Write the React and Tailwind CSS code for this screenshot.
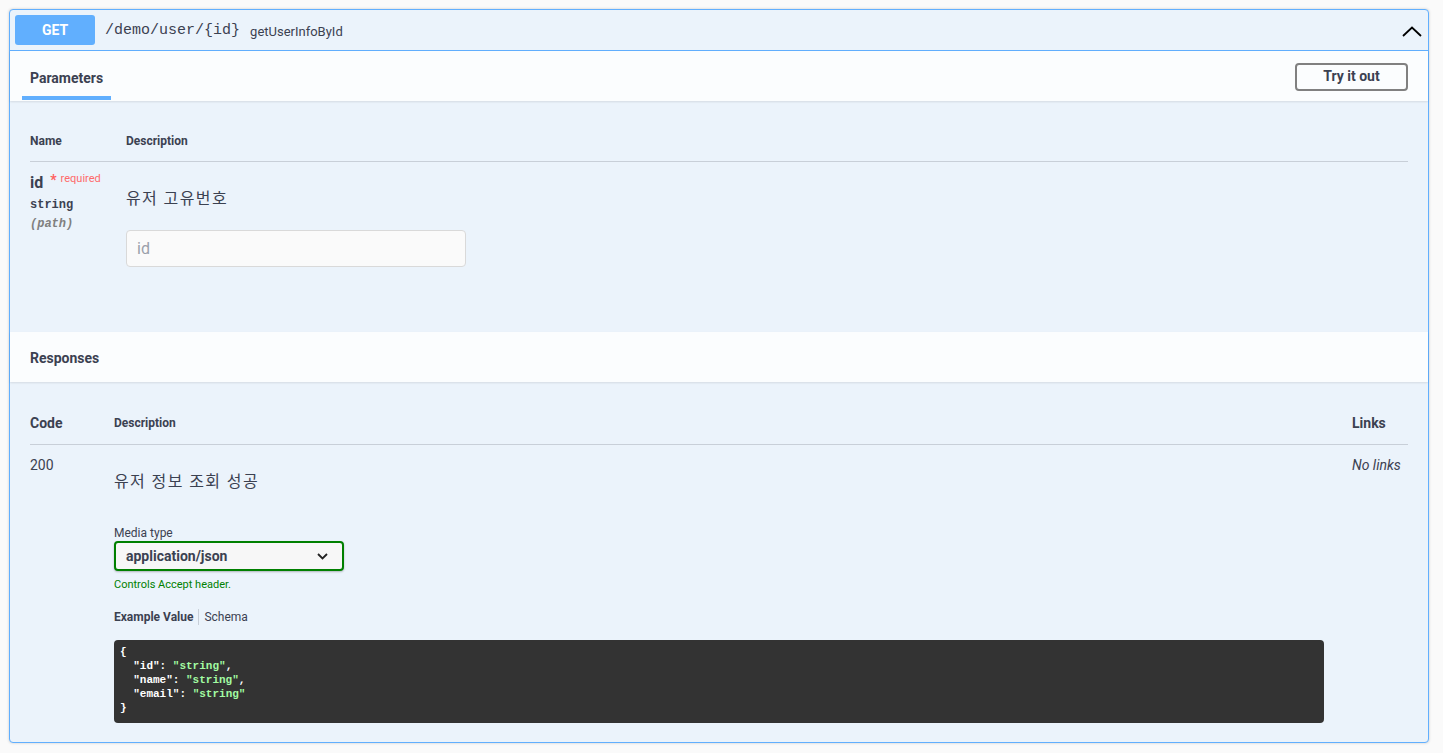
import React from "react";

const sans = { fontFamily: 'Roboto, "Noto Sans CJK KR", sans-serif' };

function ChevronUp() {
  return (
    <svg width="20" height="11" viewBox="0 0 20 11" fill="none">
      <path d="M1 10 L10 1.5 L19 10" stroke="#000" strokeWidth="1.8" />
    </svg>
  );
}

function ChevronDown() {
  return (
    <svg width="11" height="7" viewBox="0 0 11 7" fill="none">
      <path d="M1 1 L5.5 5.5 L10 1" stroke="#222" strokeWidth="1.8" />
    </svg>
  );
}

export default function App() {
  return (
    <div
      className="min-h-[753px] w-[1443px] bg-[#fafafa] pt-[9px] text-[#3b4151]"
      style={sans}
    >
      <div className="ml-[9px] w-[1420px] rounded-[4px] border border-[#61affe] bg-[#ebf3fb] shadow-[0_0_3px_rgba(0,0,0,0.19)]">
        {/* Summary header */}
        <div className="flex h-[41px] items-center border-b border-[#61affe] px-[5px]">
          <div className="flex h-[30px] w-[80px] items-center justify-center rounded-[3px] bg-[#61affe] text-[14px] font-bold text-white">
            GET
          </div>
          <div className="ml-[10px] pt-[3px] font-['Liberation_Mono',monospace] text-[15px] text-[#3b4151]">
            /demo/user/{"{"}id{"}"}
          </div>
          <div className="ml-[10px] pt-[3px] text-[13px] text-[#3b4151]">getUserInfoById</div>
          <div className="ml-auto mr-[1px] mt-[3px] flex items-center">
            <ChevronUp />
          </div>
        </div>

        {/* Parameters section header */}
        <div className="flex h-[50px] items-stretch justify-between bg-white/80 pl-[12px] pr-[20px] shadow-[0_1px_2px_rgba(0,0,0,0.1)]">
          <div className="flex flex-col justify-end">
            <div className="mb-[8px] px-[8px] text-[14px] font-bold leading-[20px]">Parameters</div>
            <div className="mb-[1px] h-[4px] w-[89px] bg-[#61affe]" />
          </div>
          <div className="flex items-center">
            <button
              className="mt-[1px] h-[28px] w-[113px] rounded-[4px] border-2 border-[#808080] bg-transparent text-[14px] font-bold text-[#3b4151]"
              style={sans}
            >
              Try it out
            </button>
          </div>
        </div>

        {/* Parameters body */}
        <div className="h-[231px] px-[20px] pt-[20px]">
          <div className="flex h-[41px] items-center border-b border-[rgba(59,65,81,0.2)] text-[12px] font-bold">
            <div className="w-[96px]">Name</div>
            <div>Description</div>
          </div>
          <div className="flex">
            <div className="w-[96px] pt-[10px]">
              <div className="flex items-start leading-[22px]">
                <span className="text-[16px] font-bold">id</span>
                <span className="ml-[7px] text-[14px] font-bold leading-[16px] text-[#ff6060]">*</span>
                <span className="ml-[4px] text-[11px] leading-[14px] text-[#ff6a6a]">required</span>
              </div>
              <div className="mt-[1px] font-['Liberation_Mono',monospace] text-[12px] font-bold leading-[20px]">string</div>
              <div className="font-['Liberation_Mono',monospace] text-[12px] font-bold italic leading-[19px] text-[#808080]">
                (path)
              </div>
            </div>
            <div className="pt-[25px]">
              <div className="text-[16px] leading-[24px] tracking-[1.4px]">유저 고유번호</div>
              <input
                placeholder="id"
                className="mt-[19px] h-[37px] w-[340px] rounded-[4px] border border-[#d9d9d9] bg-[#fafafa] px-[10px] text-[16px] placeholder:text-[#9aa0aa] outline-none"
                style={sans}
              />
            </div>
          </div>
        </div>

        {/* Responses section header */}
        <div className="flex h-[50px] items-center bg-white/80 px-[20px] shadow-[0_1px_2px_rgba(0,0,0,0.1)]">
          <div className="mt-[2px] text-[14px] font-bold">Responses</div>
        </div>

        {/* Responses body */}
        <div className="px-[20px] pb-[19px] pt-[20px]">
          <div className="flex h-[43px] items-center border-b border-[rgba(59,65,81,0.2)]">
            <div className="w-[84px] pt-[1px] text-[14px] font-bold">Code</div>
            <div className="text-[12px] font-bold">Description</div>
            <div className="ml-auto w-[56px] text-[14px] font-bold">Links</div>
          </div>
          <div className="flex">
            <div className="w-[84px] pt-[10px] text-[14px] leading-[20px]">200</div>
            <div className="flex-1 pt-[25px]">
              <div className="text-[16px] leading-[24px] tracking-[1.4px]">유저 정보 조회 성공</div>
              <div className="mt-[31px] text-[12px] leading-[16px] text-[#3b4151]">Media type</div>
              <div className="flex h-[30px] w-[230px] items-center justify-between rounded-[4px] border-2 border-[#008000] bg-[#f7f7f7] pl-[10px] pr-[14px] text-[14px] font-bold shadow-[0_1px_2px_rgba(0,0,0,0.25)]">
                <span>application/json</span>
                <ChevronDown />
              </div>
              <div className="mt-[7px] text-[11px] leading-[14px] text-[#008000]">Controls Accept header.</div>
              <div className="mt-[17px] flex items-center text-[12px] leading-[16px]">
                <span className="font-bold">Example Value</span>
                <span className="mx-[5px] h-[16px] w-px bg-[rgba(59,65,81,0.2)]" />
                <span>Schema</span>
              </div>
              <pre className="mt-[15px] w-[1210px] rounded-[4px] bg-[#333333] pb-[8px] pl-[6px] pt-[5px] font-['Liberation_Mono',monospace] text-[11px] font-bold leading-[14px] text-white">
{"{\n"}
{"  "}<span>"id"</span>: <span className="text-[#a2fca2]">"string"</span>,{"\n"}
{"  "}<span>"name"</span>: <span className="text-[#a2fca2]">"string"</span>,{"\n"}
{"  "}<span>"email"</span>: <span className="text-[#a2fca2]">"string"</span>{"\n"}
{"}"}
              </pre>
            </div>
            <div className="w-[56px] pt-[10px] text-[14px] italic leading-[20px]">No links</div>
          </div>
        </div>
      </div>
    </div>
  );
}
